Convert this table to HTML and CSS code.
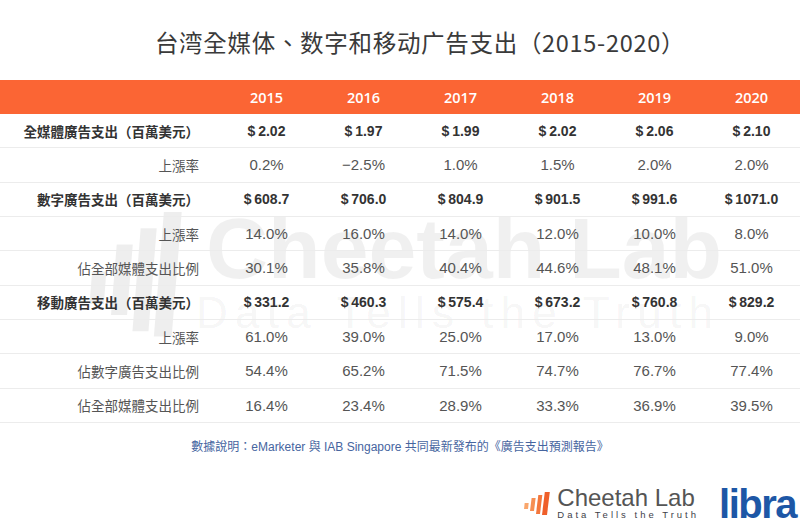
FILE: index.html
```html
<!DOCTYPE html>
<html lang="zh-Hant">
<head>
<meta charset="utf-8">
<title>台湾全媒体、数字和移动广告支出（2015-2020）</title>
<link rel="stylesheet" href="styles.css">
</head>
<body>
<div class="page">
  <div class="watermark" aria-hidden="true">
    <svg class="wm-icon" viewBox="0 0 28 24" preserveAspectRatio="none">
      <polygon points="1,17 5,17 5.7,11 1.7,11"/>
      <polygon points="7,19 11.5,19 13.1,6 8.6,6"/>
      <polygon points="13,22 17.5,22 19.8,3 15.3,3"/>
      <polygon points="19,23 24,23 26.8,0 21.8,0"/>
    </svg>
    <div class="wm-name">Cheetah Lab</div>
    <div class="wm-tag">Data Tells the Truth</div>
  </div>

  <h1 class="title">台湾全媒体、数字和移动广告支出（2015-2020）</h1>

  <div class="table">
    <div class="row head">
      <div class="label"></div>
      <div class="cell">2015</div><div class="cell">2016</div><div class="cell">2017</div>
      <div class="cell">2018</div><div class="cell">2019</div><div class="cell">2020</div>
    </div>
    <div class="row strong">
      <div class="label">全媒體廣告支出（百萬美元）</div>
      <div class="cell">$&#8201;2.02</div><div class="cell">$&#8201;1.97</div><div class="cell">$&#8201;1.99</div>
      <div class="cell">$&#8201;2.02</div><div class="cell">$&#8201;2.06</div><div class="cell">$&#8201;2.10</div>
    </div>
    <div class="row">
      <div class="label">上漲率</div>
      <div class="cell">0.2%</div><div class="cell">−2.5%</div><div class="cell">1.0%</div>
      <div class="cell">1.5%</div><div class="cell">2.0%</div><div class="cell">2.0%</div>
    </div>
    <div class="row strong">
      <div class="label">數字廣告支出（百萬美元）</div>
      <div class="cell">$&#8201;608.7</div><div class="cell">$&#8201;706.0</div><div class="cell">$&#8201;804.9</div>
      <div class="cell">$&#8201;901.5</div><div class="cell">$&#8201;991.6</div><div class="cell">$&#8201;1071.0</div>
    </div>
    <div class="row">
      <div class="label">上漲率</div>
      <div class="cell">14.0%</div><div class="cell">16.0%</div><div class="cell">14.0%</div>
      <div class="cell">12.0%</div><div class="cell">10.0%</div><div class="cell">8.0%</div>
    </div>
    <div class="row">
      <div class="label">佔全部媒體支出比例</div>
      <div class="cell">30.1%</div><div class="cell">35.8%</div><div class="cell">40.4%</div>
      <div class="cell">44.6%</div><div class="cell">48.1%</div><div class="cell">51.0%</div>
    </div>
    <div class="row strong">
      <div class="label">移動廣告支出（百萬美元）</div>
      <div class="cell">$&#8201;331.2</div><div class="cell">$&#8201;460.3</div><div class="cell">$&#8201;575.4</div>
      <div class="cell">$&#8201;673.2</div><div class="cell">$&#8201;760.8</div><div class="cell">$&#8201;829.2</div>
    </div>
    <div class="row">
      <div class="label">上漲率</div>
      <div class="cell">61.0%</div><div class="cell">39.0%</div><div class="cell">25.0%</div>
      <div class="cell">17.0%</div><div class="cell">13.0%</div><div class="cell">9.0%</div>
    </div>
    <div class="row">
      <div class="label">佔數字廣告支出比例</div>
      <div class="cell">54.4%</div><div class="cell">65.2%</div><div class="cell">71.5%</div>
      <div class="cell">74.7%</div><div class="cell">76.7%</div><div class="cell">77.4%</div>
    </div>
    <div class="row">
      <div class="label">佔全部媒體支出比例</div>
      <div class="cell">16.4%</div><div class="cell">23.4%</div><div class="cell">28.9%</div>
      <div class="cell">33.3%</div><div class="cell">36.9%</div><div class="cell">39.5%</div>
    </div>
  </div>

  <p class="note">數據說明：eMarketer 與 IAB Singapore 共同最新發布的《廣告支出預測報告》</p>

  <div class="logos">
    <div class="cheetah">
      <svg class="cl-icon" viewBox="0 0 28 24" width="28" height="24">
        <polygon points="1,17 5,17 5.7,11 1.7,11" fill="#f9a66c"/>
        <polygon points="7,19 11,19 12.6,6 8.6,6" fill="#f68e52"/>
        <polygon points="13,22 17,22 19.3,3 15.3,3" fill="#f3773d"/>
        <polygon points="19,23 24,23 26.8,0 21.8,0" fill="#ef5f2a"/>
      </svg>
      <div class="cl-text">
        <div class="cl-name">Cheetah Lab</div>
        <div class="cl-tag">Data Tells the Truth</div>
      </div>
    </div>
    <div class="libra">libra</div>
  </div>
</div>
</body>
</html>
```

FILE: styles.css
```css
* {
  box-sizing: border-box;
  margin: 0;
  padding: 0;
}

body {
  margin: 0;
  background: #ffffff;
  font-family: "Liberation Sans", "Noto Sans CJK TC", sans-serif;
}

.page {
  position: relative;
  width: 800px;
  height: 525px;
  overflow: hidden;
  background: #ffffff;
}

/* ---------- watermark ---------- */
.watermark {
  position: absolute;
  left: 0;
  top: 0;
  width: 800px;
  height: 525px;
  z-index: 0;
  pointer-events: none;
}

.wm-icon {
  position: absolute;
  left: 86px;
  top: 212px;
  width: 100px;
  height: 130px;
  fill: rgba(0, 0, 0, 0.065);
}

.wm-name {
  position: absolute;
  left: 206px;
  top: 205px;
  font-family: "Liberation Sans", sans-serif;
  font-weight: 700;
  font-size: 86px;
  line-height: 1;
  color: rgba(0, 0, 0, 0.06);
  white-space: nowrap;
}

.wm-tag {
  position: absolute;
  left: 196px;
  top: 291px;
  font-family: "Liberation Sans", sans-serif;
  font-size: 44px;
  line-height: 1;
  letter-spacing: 7.3px;
  color: rgba(0, 0, 0, 0.055);
  white-space: nowrap;
}

/* ---------- title ---------- */
.title {
  position: relative;
  z-index: 1;
  height: 80px;
  padding-top: 4px;
  padding-left: 40px;
  display: flex;
  align-items: center;
  justify-content: center;
  font-family: "Noto Sans CJK SC", sans-serif;
  font-weight: 400;
  font-size: 23.5px;
  letter-spacing: 0.7px;
  color: #3a3a3a;
}

/* ---------- table ---------- */
.table {
  position: relative;
  z-index: 1;
}

.row {
  display: grid;
  grid-template-columns: 218px repeat(6, 97px);
  align-items: center;
  height: 34.33px;
  border-bottom: 1px solid #ececec;
}

.row.head {
  height: 34px;
  border-bottom: none;
  background: #fb6534;
  color: #ffffff;
  font-family: "Open Sans", sans-serif;
  font-weight: 600;
  font-size: 14px;
}

.cell {
  text-align: center;
  font-size: 15px;
  color: #555555;
  white-space: nowrap;
}

.row.head .cell {
  color: #ffffff;
  font-family: "Open Sans", sans-serif;
  font-weight: 600;
  font-size: 14.5px;
}

.label {
  text-align: right;
  padding-right: 19px;
  font-family: "Noto Sans CJK TC", sans-serif;
  font-size: 13.5px;
  color: #555555;
  white-space: nowrap;
}

.row.strong .label {
  font-weight: 700;
  color: #333333;
}

.row.strong .cell {
  font-size: 14px;
  font-weight: 700;
  color: #333333;
}

/* ---------- note ---------- */
.note {
  position: relative;
  z-index: 1;
  margin-top: 16px;
  text-align: center;
  font-size: 12px;
  line-height: 16px;
  color: #46659f;
}

/* ---------- logos ---------- */
.logos {
  display: flex;
  justify-content: flex-end;
  align-items: center;
  margin-top: 30px;
  padding-right: 4px;
  gap: 20px;
}

.cheetah {
  display: flex;
  align-items: center;
  gap: 6px;
}

.cl-icon {
  display: block;
}

.cl-text {
  display: flex;
  flex-direction: column;
}

.cl-name {
  font-family: "Liberation Sans", sans-serif;
  font-size: 24px;
  line-height: 21px;
  color: #555555;
}

.cl-tag {
  margin-top: 2px;
  font-family: "Liberation Sans", sans-serif;
  font-size: 9.5px;
  line-height: 10px;
  letter-spacing: 3px;
  color: #3f3f4a;
  white-space: nowrap;
}

.libra {
  font-family: "Liberation Sans", sans-serif;
  font-weight: 700;
  font-size: 40px;
  line-height: 38px;
  letter-spacing: -1.5px;
  color: #1d57a6;
}
```
